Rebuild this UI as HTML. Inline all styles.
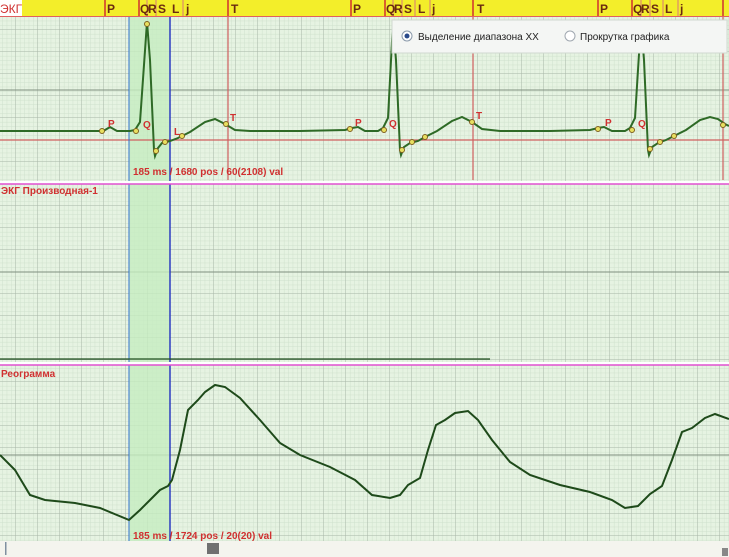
<!DOCTYPE html>
<html><head><meta charset="utf-8"><style>
body{margin:0;width:729px;height:557px;overflow:hidden;background:#e6f3e2;font-family:"Liberation Sans",sans-serif}
svg{display:block}
</style></head><body>
<svg width="729" height="557" xmlns="http://www.w3.org/2000/svg" font-family="Liberation Sans, DejaVu Sans, sans-serif">
<defs>
<pattern id="mn" x="-6" y="8" width="4.4" height="4.4" patternUnits="userSpaceOnUse"><path d="M4.4 0V4.4M0 4.4H4.4" stroke="#cfe0cc" stroke-width="1" fill="none"/></pattern>
<pattern id="mj" x="-6" y="8" width="22" height="22" patternUnits="userSpaceOnUse"><path d="M22 0V22M0 22H22" stroke="#a7b6a6" stroke-width="1" fill="none"/></pattern>
</defs>
<rect width="729" height="557" fill="#e6f3e2"/>
<rect width="729" height="541" fill="url(#mn)"/>
<rect width="729" height="541" fill="url(#mj)"/>
<g stroke="#7f8f7f" stroke-width="1"><line x1="0" y1="90" x2="729" y2="90"/><line x1="0" y1="272" x2="729" y2="272"/><line x1="0" y1="455" x2="729" y2="455"/></g>
<!-- selection -->
<rect x="129" y="17" width="41" height="524" fill="#c6ecc0" opacity="0.8"/>
<!-- header -->
<rect x="0" y="0" width="729" height="17" fill="#f3ee2a"/>
<rect x="0" y="0" width="22" height="16" fill="#fff"/>
<line x1="0" y1="16.5" x2="729" y2="16.5" stroke="#e06060"/>
<g stroke="#d03030" stroke-width="1.5">
<line x1="105" y1="0" x2="105" y2="16"/><line x1="139" y1="0" x2="139" y2="16"/><line x1="228" y1="0" x2="228" y2="16"/>
<line x1="351" y1="0" x2="351" y2="16"/><line x1="385" y1="0" x2="385" y2="16"/><line x1="473" y1="0" x2="473" y2="16"/>
<line x1="598" y1="0" x2="598" y2="16"/><line x1="632" y1="0" x2="632" y2="16"/><line x1="723" y1="0" x2="723" y2="16"/>
</g>
<g stroke="#d87878" stroke-width="1"><line x1="147" y1="0" x2="147" y2="16"/><line x1="156" y1="0" x2="156" y2="16"/><line x1="183" y1="0" x2="183" y2="16"/>
<line x1="393" y1="0" x2="393" y2="16"/><line x1="402" y1="0" x2="402" y2="16"/><line x1="415" y1="0" x2="415" y2="16"/><line x1="430" y1="0" x2="430" y2="16"/>
<line x1="641" y1="0" x2="641" y2="16"/><line x1="650" y1="0" x2="650" y2="16"/><line x1="663" y1="0" x2="663" y2="16"/><line x1="678" y1="0" x2="678" y2="16"/></g>
<g font-size="12" fill="#6a2a10" font-weight="bold">
<text x="0" y="13" fill="#d03030" font-weight="normal">ЭКГ</text>
<text x="107" y="13">P</text><text x="140" y="13">Q</text><text x="148" y="13">R</text><text x="158" y="13">S</text><text x="172" y="13">L</text><text x="186" y="13">j</text><text x="231" y="13">T</text>
<text x="353" y="13">P</text><text x="386" y="13">Q</text><text x="394" y="13">R</text><text x="404" y="13">S</text><text x="418" y="13">L</text><text x="432" y="13">j</text><text x="477" y="13">T</text>
<text x="600" y="13">P</text><text x="633" y="13">Q</text><text x="641" y="13">R</text><text x="651" y="13">S</text><text x="665" y="13">L</text><text x="680" y="13">j</text>
</g>
<!-- red lines -->
<g stroke="#d06060" stroke-width="1.2">
<line x1="228" y1="17" x2="228" y2="180"/><line x1="473" y1="17" x2="473" y2="180"/><line x1="723" y1="17" x2="723" y2="180"/>
<line x1="0" y1="140" x2="729" y2="140"/>
</g>
<!-- blue lines -->
<line x1="129" y1="17" x2="129" y2="541" stroke="#3070d0" stroke-width="1"/>
<line x1="170" y1="17" x2="170" y2="541" stroke="#2030c0" stroke-width="1.4"/>
<!-- panel separators -->
<rect x="0" y="181" width="729" height="3" fill="#fff"/>
<line x1="0" y1="184" x2="729" y2="184" stroke="#e050d0" stroke-width="1.5"/>
<rect x="0" y="362" width="729" height="3" fill="#fff"/>
<line x1="0" y1="365" x2="729" y2="365" stroke="#e050d0" stroke-width="1.5"/>
<line x1="0" y1="359" x2="490" y2="359" stroke="#205020" stroke-width="1.2"/>
<!-- ECG -->
<path fill="none" stroke="#2e6a26" stroke-width="2" d="M0 131 L60 131 L100 131 L105 130 L110 127 L117 131 L130 131 L135 130 L140 122 L147 22 L150 60 L154 150 L155 156 L158 148 L162 143 L170 141 L178 138 L190 132 L205 122 L215 119 L225 124 L235 130 L250 131 L300 131 L345 130 L352 128 L358 127 L365 131 L378 131 L383 128 L388 118 L393 22 L396 60 L400 150 L401 155 L404 147 L410 143 L418 141 L425 137 L437 131 L452 121 L462 117 L472 122 L482 129 L500 131 L550 131 L590 130 L598 128 L604 127 L612 131 L625 131 L630 128 L635 118 L641 22 L644 60 L648 150 L649 155 L652 147 L658 143 L666 140 L674 136 L686 130 L700 120 L710 117 L718 119 L725 124 L729 126"/>
<g fill="#e8e060" stroke="#806020" stroke-width="1">
<circle cx="147" cy="24" r="2.5"/><circle cx="102" cy="131" r="2.5"/><circle cx="136" cy="131" r="2.5"/><circle cx="156" cy="151" r="2.5"/><circle cx="165" cy="142" r="2.5"/><circle cx="182" cy="136" r="2.5"/><circle cx="226" cy="124" r="2.5"/>
<circle cx="350" cy="129" r="2.5"/><circle cx="384" cy="130" r="2.5"/><circle cx="402" cy="150" r="2.5"/><circle cx="412" cy="142" r="2.5"/><circle cx="425" cy="137" r="2.5"/><circle cx="472" cy="122" r="2.5"/>
<circle cx="598" cy="129" r="2.5"/><circle cx="632" cy="130" r="2.5"/><circle cx="650" cy="149" r="2.5"/><circle cx="660" cy="142" r="2.5"/><circle cx="674" cy="136" r="2.5"/><circle cx="723" cy="125" r="2.5"/>
</g>
<g font-size="10" fill="#d03030" font-weight="bold">
<text x="108" y="127">P</text><text x="143" y="128">Q</text><text x="174" y="135">L</text><text x="230" y="121">T</text>
<text x="355" y="126">P</text><text x="389" y="127">Q</text><text x="476" y="119">T</text>
<text x="605" y="126">P</text><text x="638" y="127">Q</text>
<text x="133" y="175">185 ms / 1680 pos / 60(2108) val</text>
<text x="1" y="194">ЭКГ Производная-1</text>
<text x="1" y="377">Реограмма</text>
<text x="133" y="539">185 ms / 1724 pos / 20(20) val</text>
</g>
<!-- reogram -->
<path fill="none" stroke="#1e4a1a" stroke-width="2" d="M0 455 L15 470 L30 495 L45 500 L75 503 L100 508 L129 520 L140 510 L152 498 L160 490 L168 486 L172 480 L180 450 L188 410 L198 400 L205 392 L215 385 L225 387 L240 398 L260 420 L280 443 L300 455 L330 467 L355 480 L372 495 L390 498 L400 495 L408 485 L420 478 L428 450 L436 425 L445 420 L455 413 L468 411 L478 420 L492 440 L510 462 L530 475 L560 485 L590 492 L612 500 L625 508 L638 506 L650 494 L662 486 L672 460 L682 432 L692 428 L705 418 L715 414 L729 419"/>
<!-- radio dialog -->
<rect x="392" y="20" width="335" height="33" fill="#f4f6f4" stroke="#d0d8d0"/>
<circle cx="407" cy="36" r="5" fill="#fff" stroke="#8a9aaa"/><circle cx="407" cy="36" r="2.5" fill="#2a4a8a"/>
<text x="418" y="40" font-size="10" fill="#222">Выделение диапазона XX</text>
<circle cx="570" cy="36" r="5" fill="#fff" stroke="#a0a8b0"/>
<text x="580" y="40" font-size="10" fill="#222">Прокрутка графика</text>
<!-- scrollbar -->
<rect x="0" y="541" width="729" height="16" fill="#f4f4ee"/>
<rect x="5" y="542" width="1.5" height="13" fill="#8090a0"/>
<rect x="207" y="543" width="12" height="11" fill="#707070"/>
<rect x="722" y="548" width="6" height="8" fill="#888"/>
</svg>
</body></html>
